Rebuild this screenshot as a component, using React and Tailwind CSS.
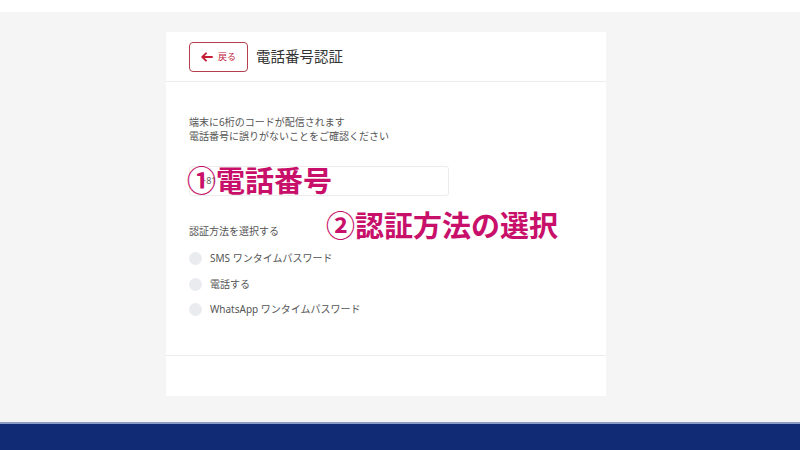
import React from "react";

const font = { fontFamily: '"Noto Sans", "Noto Sans CJK JP", sans-serif' };

function Radio({ label }) {
  return (
    <div className="flex items-center h-[25.5px]">
      <span className="w-[13px] h-[13px] rounded-full bg-[#e9ebef] mr-[8px] shrink-0" />
      <span className="text-[10px] text-[#555]">{label}</span>
    </div>
  );
}

export default function App() {
  return (
    <div className="w-[800px] h-[450px] flex flex-col bg-white overflow-hidden" style={font}>
      <div className="h-[12px] bg-white" />
      <div className="flex-1 bg-[#f5f5f5] flex pl-[166px] pt-[20px]">
        <div className="w-[440px] h-[364px] bg-white flex flex-col relative">
          <div className="h-[50px] border-b border-[#ececec] flex items-center pl-[23px] gap-[8px]">
            <button className="w-[59px] h-[30px] border border-[#b4404e] rounded-[4px] flex items-center justify-center gap-[5px] text-[#c0203a]">
              <svg width="12" height="10" viewBox="0 0 12 10" fill="none">
                <path d="M11 5H1.8M5 1.3L1.3 5 5 8.7" stroke="#c41e36" strokeWidth="1.9" strokeLinecap="round" strokeLinejoin="round" />
              </svg>
              <span className="text-[9px] leading-none">戻る</span>
            </button>
            <span className="text-[14.5px] text-[#333]">電話番号認証</span>
          </div>
          <div className="flex-1 px-[23px] pt-[33px]">
            <div className="text-[10px] leading-[14px] text-[#555]">
              <div>端末に6桁のコードが配信されます</div>
              <div>電話番号に誤りがないことをご確認ください</div>
            </div>
            <div className="mt-[23px] w-[260px] h-[30px] border border-[#ececec] rounded-[3px] flex items-center pl-[11px]">
              <span className="text-[9px] text-[#666]">+81</span>
            </div>
            <div className="mt-[28px] text-[10px] text-[#555] leading-[14px]">認証方法を選択する</div>
            <div className="mt-[8px] flex flex-col">
              <Radio label="SMS ワンタイムパスワード" />
              <Radio label="電話する" />
              <Radio label="WhatsApp ワンタイムパスワード" />
            </div>
          </div>
          <div className="h-[41px] border-t border-[#ececec]" />
          <div className="absolute left-[21px] top-[129px] text-[29px] font-bold leading-[40px] text-[#c8106a] whitespace-nowrap">
            ①電話番号
          </div>
          <div className="absolute left-[160px] top-[174px] text-[29px] font-bold leading-[40px] text-[#c8106a] whitespace-nowrap">
            ②認証方法の選択
          </div>
        </div>
      </div>
      <div className="h-[2px] bg-[#8a9bc4]" />
      <div className="h-[26px] bg-[#112b74]" />
    </div>
  );
}
